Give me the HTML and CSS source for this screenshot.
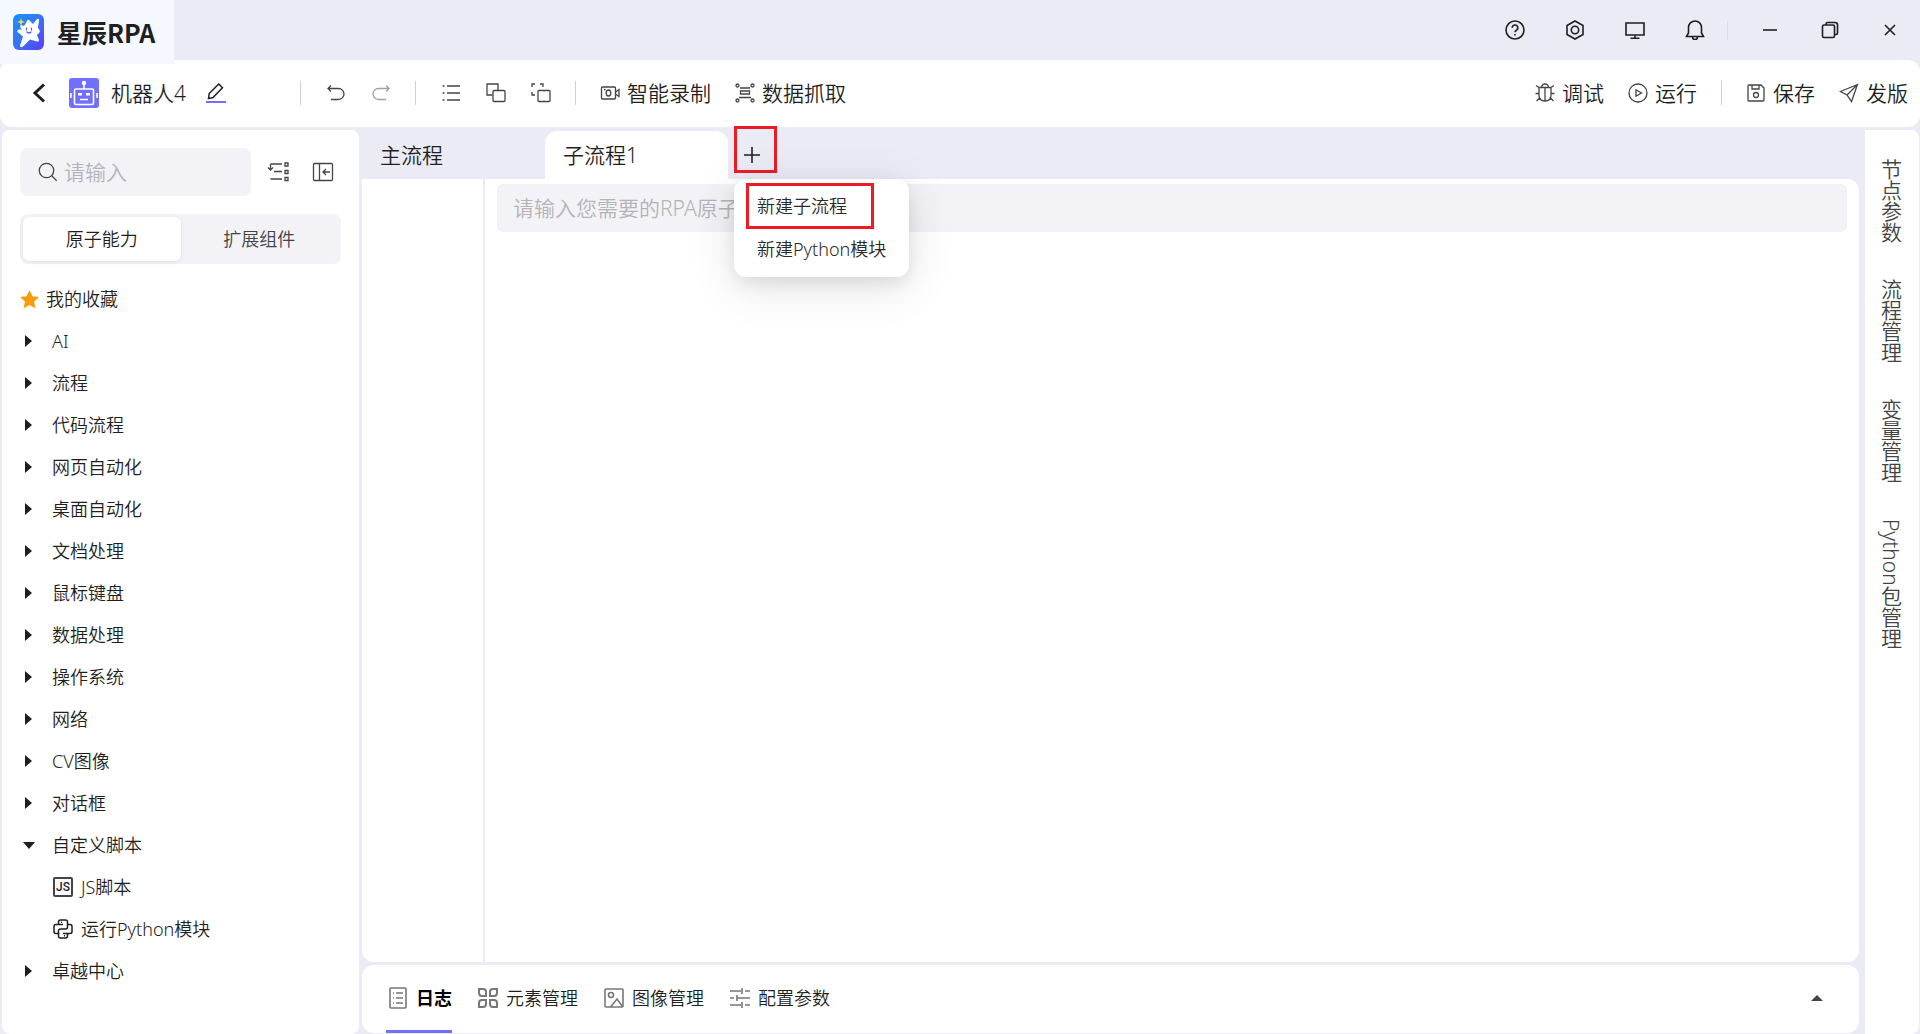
FILE: index.html
```html
<!DOCTYPE html>
<html lang="zh-CN">
<head>
    <meta charset="UTF-8">
    <meta name="viewport" content="width=device-width, initial-scale=1.0">
    <title>星辰RPA</title>
    <link rel="stylesheet" href="styles.css">
</head>
<body>
    <header class="titlebar">
        <div class="brand">
            <svg class="brand-logo" viewBox="0 0 31 36">
                <defs>
                    <linearGradient id="brand-bg" x1="0" y1="0" x2="1" y2="1">
                        <stop offset="0" stop-color="#1296fb"/>
                        <stop offset="0.5" stop-color="#3a73f0"/>
                        <stop offset="1" stop-color="#5a3cf8"/>
                    </linearGradient>
                </defs>
                <rect width="31" height="36" rx="6" fill="url(#brand-bg)"/>
                <path d="M13 9q1-4 3-3l4 4 4-5q2-1 2 1l-1 8q3 3 1 5l-2 2 2 5q0 2-2 1.500l-7-2-7 7q-3 2-3-1l3-9-5-4q-2-2 1-3h3q-3-3-1-4.500l3 1z" fill="#fff"/>
                <path d="M8 4l1 3 3 1-3 1-1 3-1-3-3-1 3-1z" fill="#fbd35b"/>
                <path d="M13.500 14v2M18.500 14v2M14 18q2 2 4 0" stroke="#4a5be8" stroke-width="1.200" fill="none" stroke-linecap="round"/>
            </svg>
            <span class="brand-name">星辰RPA</span>
        </div>
        <div class="window-actions">
            <button type="button" aria-label="帮助">
                <svg class="icon" viewBox="0 0 20 20"><circle cx="10" cy="10" r="9"/><path d="M7.200 7.800a2.800 2.800 0 1 1 4.200 2.400Q10 11 10 12.300M10 14v1.400"/></svg>
            </button>
            <button type="button" aria-label="设置">
                <svg class="icon" viewBox="0 0 20 20"><path d="M10 1l8 4.500v9L10 19l-8-4.500v-9z"/><circle cx="10" cy="10" r="3.700"/></svg>
            </button>
            <button type="button" aria-label="桌面">
                <svg class="icon" viewBox="0 0 20 20"><path d="M1 3h18v12H1zM10 15v3.200M5.500 18.300h9"/></svg>
            </button>
            <button type="button" aria-label="通知">
                <svg class="icon" viewBox="0 0 20 20"><path d="M1.500 16.500L3.500 13V7.500a6.500 6.500 0 0 1 13 0V13l2 3.500zM7.500 17q0 2.500 2.500 2.500t2.500-2.500"/></svg>
            </button>
            <span class="window-divider"></span>
            <button type="button" aria-label="最小化">
                <svg class="icon" viewBox="0 0 20 20"><path d="M3 10h14"/></svg>
            </button>
            <button type="button" aria-label="还原">
                <svg class="icon" viewBox="0 0 20 20"><rect x="2.500" y="5" width="12" height="12.500" rx="1.500"/><path d="M6 5V4q0-1.500 1.500-1.500H15Q17.500 2.500 17.500 5v8q0 1.500-1.500 1.500h-1"/></svg>
            </button>
            <button type="button" aria-label="关闭">
                <svg class="icon" viewBox="0 0 20 20"><path d="M5 5l10 10M15 5L5 15"/></svg>
            </button>
        </div>
    </header>

    <nav class="toolbar">
        <div class="project">
            <button type="button" class="back" aria-label="返回">
                <svg viewBox="0 0 14 20"><path d="M12 1.500L3 10l9 8.500" fill="none" stroke="#1f1f1f" stroke-width="3"/></svg>
            </button>
            <svg class="robot" viewBox="0 0 30 30">
                <rect width="30" height="30" rx="3" fill="#726fff"/>
                <g fill="none" stroke="#fff" stroke-width="1.600">
                    <rect x="5.500" y="11" width="19" height="15.500" rx="1.500"/>
                    <path d="M15 6v5M2 15v5M28 15v5M11 21.500h8"/>
                </g>
                <circle cx="15" cy="5" r="2.200" fill="#fff"/>
                <path d="M9 15h4v2.500H9zM17 15h4v2.500h-4z" fill="#fff"/>
            </svg>
            <span>机器人4</span>
            <button type="button" class="rename" aria-label="重命名">
                <svg viewBox="0 0 20 20"><path d="M2.500 15.500l.7-5L12.700 1l3.800 3.800-9.500 9.700z" fill="none" stroke="#1f1f1f" stroke-width="1.500"/><path d="M0 19h20" stroke="#726fff" stroke-width="2"/></svg>
            </button>
        </div>
        <span class="divider"></span>
        <div class="tool-group">
            <button type="button" aria-label="撤销">
                <svg class="icon" viewBox="0 0 20 20"><path d="M5 2.500L2 5.500l3 3M2 5.500h10.500a5.500 5.500 0 0 1 0 11H5"/></svg>
            </button>
            <button type="button" class="disabled" aria-label="重做" disabled>
                <svg class="icon" viewBox="0 0 20 20"><path d="M15 2.500l3 3-3 3M18 5.500H7.500a5.500 5.500 0 0 0 0 11H15"/></svg>
            </button>
        </div>
        <span class="divider"></span>
        <div class="tool-group">
            <button type="button" aria-label="列表">
                <svg class="icon" viewBox="0 0 20 20"><path d="M6 3h13M6 10h13M6 17h13M1.500 3h2M1.500 10h2M1.500 17h2"/></svg>
            </button>
            <button type="button" aria-label="编组">
                <svg class="icon" viewBox="0 0 20 20"><path d="M6.500 12H1V1h11v6"/><rect x="7" y="7.500" width="12" height="11" rx="1"/></svg>
            </button>
            <button type="button" aria-label="取消编组">
                <svg class="icon" viewBox="0 0 20 20"><path d="M1 4V1h3M9 1h3v3M1 9v3h3"/><rect x="7" y="7.500" width="12" height="11" rx="1"/></svg>
            </button>
        </div>
        <span class="divider"></span>
        <div class="actions">
            <button type="button">
                <svg class="icon" viewBox="0 0 20 20"><rect x="1.500" y="4" width="14" height="12" rx="1"/><ellipse cx="8.500" cy="10" rx="2.300" ry="3"/><path d="M15.500 9l3.500-2.500v7L15.500 11M4 6.500h1.500"/></svg>
                <span>智能录制</span>
            </button>
            <button type="button">
                <svg class="icon" viewBox="0 0 20 20"><circle cx="2.500" cy="2.500" r="1.500"/><circle cx="17.500" cy="2.500" r="1.500"/><circle cx="2.500" cy="17.500" r="1.500"/><circle cx="17.500" cy="17.500" r="1.500"/><path d="M5 5h10M5.500 8h9v3h-9zM4 14.500h12"/></svg>
                <span>数据抓取</span>
            </button>
        </div>
        <div class="actions actions-right">
            <button type="button">
                <svg class="icon" viewBox="0 0 20 20"><path d="M6.500 4.500a3.500 3.500 0 0 1 7 0M4 4.500h12V12q0 6-6 6t-6-6zM10 4.500V18M4 4.500L1 2.500M16 4.500l3-2M4 10.500H.500M16 10.500h3.500M4.500 15l-3 3M15.500 15l3 3"/></svg>
                <span>调试</span>
            </button>
            <button type="button">
                <svg class="icon" viewBox="0 0 20 20"><circle cx="10" cy="10" r="9"/><path d="M8 6.800v6.400l5.500-3.200z"/></svg>
                <span>运行</span>
            </button>
            <span class="divider"></span>
            <button type="button">
                <svg class="icon" viewBox="0 0 20 20"><path d="M2 3q0-1 1-1h12l3 3v12q0 1-1 1H3q-1 0-1-1zM6 2v4h7V2"/><circle cx="10" cy="12" r="2.500"/></svg>
                <span>保存</span>
            </button>
            <button type="button">
                <svg class="icon" viewBox="0 0 20 20"><path d="M18.500 1.500L1.500 8.500l6.500 3.500L12.500 18.500zM8 12l10.500-10.500"/></svg>
                <span>发版</span>
            </button>
        </div>
    </nav>

    <div class="workspace">
        <aside class="sidebar">
            <div class="search-row">
                <label class="search">
                    <svg class="icon" viewBox="0 0 20 20"><circle cx="8.500" cy="8.500" r="7.200"/><path d="M13.700 13.700l5 5"/></svg>
                    <input type="text" placeholder="请输入" aria-label="搜索">
                </label>
                <div class="search-tools">
                    <button type="button" aria-label="收起全部">
                        <svg class="icon" viewBox="0 0 22 20"><path d="M3.500 2v6M1 5.500L3.500 8 6 5.500M3.500 2h11.500M7 9.500h8M3.500 17h11.500"/><path d="M18 1h3v3h-3zM18 8.500h3v3h-3zM18 15.500h3v3h-3z"/></svg>
                    </button>
                    <button type="button" aria-label="收起侧栏">
                        <svg class="icon" viewBox="0 0 22 20"><rect x="1.500" y="1.500" width="19" height="17" rx="1"/><path d="M7.500 1.500v17M18 10h-7M14 7l-3 3 3 3"/></svg>
                    </button>
                </div>
            </div>
            <div class="segmented">
                <button type="button" class="active">原子能力</button>
                <button type="button">扩展组件</button>
            </div>
            <ul class="tree">
                <li class="favorite">
                    <svg viewBox="0 0 20 20"><path d="M10 0l3 6.500 7 .8-5.200 4.800 1.400 7L10 15.700 3.800 19.100l1.400-7L0 7.300l7-.8z" fill="#f59e0b"/></svg>
                    <span>我的收藏</span>
                </li>
                <li><i class="caret"></i>AI</li>
                <li><i class="caret"></i>流程</li>
                <li><i class="caret"></i>代码流程</li>
                <li><i class="caret"></i>网页自动化</li>
                <li><i class="caret"></i>桌面自动化</li>
                <li><i class="caret"></i>文档处理</li>
                <li><i class="caret"></i>鼠标键盘</li>
                <li><i class="caret"></i>数据处理</li>
                <li><i class="caret"></i>操作系统</li>
                <li><i class="caret"></i>网络</li>
                <li><i class="caret"></i>CV图像</li>
                <li><i class="caret"></i>对话框</li>
                <li><i class="caret open"></i>自定义脚本</li>
                <li class="leaf">
                    <span class="js-icon">JS</span>
                    <span>JS脚本</span>
                </li>
                <li class="leaf">
                    <svg class="icon" viewBox="0 0 20 20"><path d="M5.500 5.500V3q0-2 2-2h5q2 0 2 2v5q0 2-2 2h-5q-2 0-2 2v2.500H3q-2 0-2-2v-5q0-2 2-2h7"/><path d="M14.500 5.500H17q2 0 2 2v5q0 2-2 2h-7M5.500 14v3q0 2 2 2h5q2 0 2-2v-2.500M8 3.300h1M11 16.700h1"/></svg>
                    <span>运行Python模块</span>
                </li>
                <li><i class="caret"></i>卓越中心</li>
            </ul>
        </aside>

        <main class="main">
            <div class="tabs">
                <button type="button" class="tab">主流程</button>
                <button type="button" class="tab active">子流程1</button>
                <div class="add">
                    <button type="button" class="add-button" aria-label="新建">
                        <svg class="icon" viewBox="0 0 20 20"><path d="M10 2v16M2 10h16"/></svg>
                    </button>
                    <div class="menu">
                        <button type="button" class="marked">新建子流程</button>
                        <button type="button">新建Python模块</button>
                    </div>
                </div>
            </div>
            <section class="canvas">
                <div class="gutter"></div>
                <div class="flow">
                    <input type="text" class="flow-search" placeholder="请输入您需要的RPA原子能力" aria-label="原子能力">
                </div>
            </section>
            <footer class="bottom-bar">
                <button type="button" class="active">
                    <svg class="icon" viewBox="0 0 24 24"><rect x="4" y="2" width="16" height="20" rx="1"/><path d="M7 7h1M7 12h1M7 17h1M10 7h7M10 12h7M10 17h7"/></svg>
                    <span>日志</span>
                </button>
                <button type="button">
                    <svg class="icon petals" viewBox="0 0 24 24"><path d="M3 3h4q3 0 3 3v4H6q-3 0-3-3zM21 3h-4q-3 0-3 3v4h4q3 0 3-3zM3 21v-4q0-3 3-3h4v4q0 3-3 3zM21 21h-4q-3 0-3-3v-4h4q3 0 3 3z"/></svg>
                    <span>元素管理</span>
                </button>
                <button type="button">
                    <svg class="icon" viewBox="0 0 24 24"><rect x="3" y="3" width="18" height="18" rx="1"/><circle cx="9" cy="9" r="2.500"/><path d="M8.500 21l6.500-8 6 8"/></svg>
                    <span>图像管理</span>
                </button>
                <button type="button">
                    <svg class="icon" viewBox="0 0 24 24"><path d="M2 5h11M14 2v6M17 5h5M2 12h4M9 9v6M9 12h13M2 19h11M14 16v6M17 19h5"/></svg>
                    <span>配置参数</span>
                </button>
                <button type="button" class="expand" aria-label="展开"><i class="caret-up"></i></button>
            </footer>
        </main>

        <nav class="side-tabs">
            <button type="button">节点参数</button>
            <button type="button">流程管理</button>
            <button type="button">变量管理</button>
            <button type="button">Python包管理</button>
        </nav>
    </div>
</body>
</html>
```
FILE: styles.css
```css
*, *::after {
    box-sizing: border-box;
}

body, html {
    margin: 0;
    padding: 0;
    height: 100%;
}

body {
    display: flex;
    flex-direction: column;
    overflow: hidden;
    background-color: #ebebf5;
    color: #1f1f1f;
    font-family: "Noto Sans", "Noto Sans CJK SC", sans-serif;
    font-size: 18px;
    font-weight: 350;
    line-height: 24px;
}

button, input {
    padding: 0;
    border: none;
    background: none;
    color: inherit;
    font: inherit;
}

button {
    display: flex;
    align-items: center;
    cursor: pointer;
    white-space: nowrap;
}

svg {
    display: block;
    flex-shrink: 0;
}

.icon {
    width: 20px;
    height: 20px;
    fill: none;
    stroke: #444;
    stroke-width: 1.3;
}

/* Title bar */
.titlebar {
    display: flex;
    justify-content: space-between;
    height: 60px;
    flex-shrink: 0;
}

.brand {
    display: flex;
    align-items: center;
    gap: 13px;
    position: relative;
    z-index: 1;
    width: 174px;
    height: 64px;
    padding-left: 13px;
    background-color: #f5f8ff;
}

.brand-logo {
    width: 31px;
    height: 36px;
}

.brand-name {
    font-family: "Noto Sans CJK SC", sans-serif;
    font-size: 25px;
    font-weight: bold;
    white-space: nowrap;
}

.window-actions {
    display: flex;
    align-items: center;
}

.window-actions button {
    justify-content: center;
    width: 60px;
    height: 60px;
}

.window-actions .icon {
    stroke: #1f1f1f;
    stroke-width: 1.6;
}

.window-divider {
    width: 1px;
    height: 19px;
    margin: 0 12px 0 2px;
    background-color: #dcdce4;
}

/* Toolbar */
.toolbar {
    display: flex;
    align-items: center;
    flex-shrink: 0;
    height: 67px;
    padding: 0 12px 1px 32px;
    border-radius: 12px;
    background-color: #fff;
}

.project {
    display: flex;
    align-items: center;
    width: 268px;
    font-size: 21px;
}

.back svg {
    width: 14px;
    height: 20px;
}

.robot {
    width: 30px;
    height: 30px;
    margin: 0 12px 0 23px;
}

.rename {
    margin-left: 20px;
}

.rename svg {
    width: 20px;
    height: 20px;
}

.divider {
    width: 1px;
    height: 24px;
    background-color: #d0d0d4;
}

.tool-group {
    display: flex;
    margin: 0 12px;
}

.tool-group button {
    justify-content: center;
    width: 45px;
    height: 36px;
}

.tool-group .disabled {
    opacity: 0.5;
}

.actions {
    display: flex;
    align-items: center;
    gap: 24px;
    margin-left: 24px;
    font-size: 21px;
}

.actions button {
    gap: 7px;
}

.actions-right {
    margin-left: auto;
}

/* Workspace */
.workspace {
    display: flex;
    flex: 1;
    min-height: 0;
    padding: 3px 1px 0 2px;
}

.sidebar {
    width: 357px;
    flex-shrink: 0;
    padding: 18px;
    border-radius: 8px;
    background-color: #fff;
}

.search-row {
    display: flex;
    align-items: center;
    gap: 16px;
}

.search {
    display: flex;
    align-items: center;
    gap: 6px;
    width: 231px;
    height: 48px;
    padding: 0 18px;
    border-radius: 8px;
    background-color: #f2f2f7;
    font-size: 21px;
}

.search input {
    width: 100%;
    min-width: 0;
}

input::placeholder {
    color: #b4b4b8;
    opacity: 1;
}

.search-tools {
    display: flex;
    gap: 23px;
}

.search-tools .icon {
    width: 22px;
}

.segmented {
    display: flex;
    height: 50px;
    margin-top: 18px;
    padding: 3px;
    border-radius: 8px;
    background-color: #f2f2f7;
}

.segmented button {
    flex: 1;
    justify-content: center;
    border-radius: 6px;
    color: #444;
}

.segmented .active {
    background-color: #fff;
    color: #1f1f1f;
    box-shadow: 0 1px 4px rgba(0, 0, 0, 0.08);
}

.tree {
    margin: 14px 0 0;
    padding: 0;
    list-style: none;
}

.tree li {
    display: flex;
    align-items: center;
    height: 42px;
}

.tree .favorite {
    gap: 7px;
}

.favorite svg {
    width: 19px;
    height: 19px;
}

.caret {
    width: 0;
    height: 0;
    margin: 0 20px 0 5px;
    border: 6px solid transparent;
    border-left: 7px solid #1f1f1f;
    border-right: none;
}

.caret.open {
    margin: 0 17px 0 3px;
    border: 6px solid transparent;
    border-top: 7px solid #1f1f1f;
    border-bottom: none;
}

.tree .leaf {
    gap: 8px;
    padding-left: 33px;
}

.js-icon {
    width: 20px;
    height: 20px;
    border: 2px solid #444;
    border-radius: 2px;
    font-family: Roboto, sans-serif;
    font-size: 12px;
    font-weight: 500;
    line-height: 17px;
    text-align: center;
}

.leaf .icon {
    stroke: #1f1f1f;
    stroke-width: 1.5;
}

/* Flow editor */
.main {
    display: flex;
    flex: 1;
    flex-direction: column;
    min-width: 0;
    margin: 0 6px 0 3px;
    padding-bottom: 1px;
}

.tabs {
    display: flex;
    align-items: flex-end;
    flex-shrink: 0;
    height: 49px;
}

.tab {
    width: 183px;
    height: 48px;
    padding: 0 18px;
    border-radius: 12px 12px 0 0;
    font-size: 21px;
}

.tab.active {
    background-color: #fff;
}

.add {
    position: relative;
    margin-left: 6px;
}

.add-button {
    justify-content: center;
    width: 36px;
    height: 48px;
}

.add-button .icon {
    stroke: #1f1f1f;
    stroke-width: 1.6;
}

.add-button::after,
.menu .marked::after {
    content: "";
    position: absolute;
    border: 3px solid #ed1c24;
}

.add-button::after {
    top: -5px;
    left: 0;
    width: 43px;
    height: 47px;
}

.menu {
    position: absolute;
    top: 48px;
    left: 0;
    z-index: 2;
    width: 175px;
    padding: 5px 0 7px;
    border-radius: 12px;
    background-color: #fff;
    color: #2a2a2a;
    box-shadow: 0 9px 48px rgba(0, 0, 0, 0.12), 0 6px 16px rgba(0, 0, 0, 0.08);
}

.menu button {
    width: 100%;
    height: 43px;
    padding-left: 23px;
}

.menu .marked::after {
    top: 4px;
    left: 12px;
    width: 128px;
    height: 46px;
}

.canvas {
    display: flex;
    flex: 1;
    border-radius: 0 12px 12px 12px;
    background-color: #fff;
}

.gutter {
    width: 123px;
    border-right: 2px solid #ebebef;
}

.flow {
    flex: 1;
    padding: 5px 12px;
}

.flow-search {
    width: 100%;
    height: 48px;
    padding: 0 16px;
    border-radius: 6px;
    background-color: #f2f2f7;
    font-size: 21px;
}

.bottom-bar {
    display: flex;
    gap: 24px;
    flex-shrink: 0;
    height: 68px;
    margin-top: 3px;
    padding: 0 24px;
    border-radius: 12px;
    background-color: #fff;
}

.bottom-bar button {
    gap: 6px;
    border-bottom: 3px solid transparent;
}

.bottom-bar .active {
    border-bottom-color: #726fff;
    color: #000;
    font-weight: bold;
}

.bottom-bar .icon {
    width: 24px;
    height: 24px;
    stroke: #777;
    stroke-width: 1.6;
}

.bottom-bar .petals {
    stroke-width: 2;
}

.bottom-bar .expand {
    margin-left: auto;
    padding: 0 12px;
}

.caret-up {
    border: 6px solid transparent;
    border-top: none;
    border-bottom-color: #444;
}

.side-tabs {
    display: flex;
    flex-direction: column;
    align-items: center;
    gap: 36px;
    width: 54px;
    flex-shrink: 0;
    padding: 29px 3px 0 0;
    border-radius: 0 8px 8px 0;
    background-color: #fff;
    color: #444;
    font-size: 21px;
}

.side-tabs button {
    writing-mode: vertical-rl;
}
```
